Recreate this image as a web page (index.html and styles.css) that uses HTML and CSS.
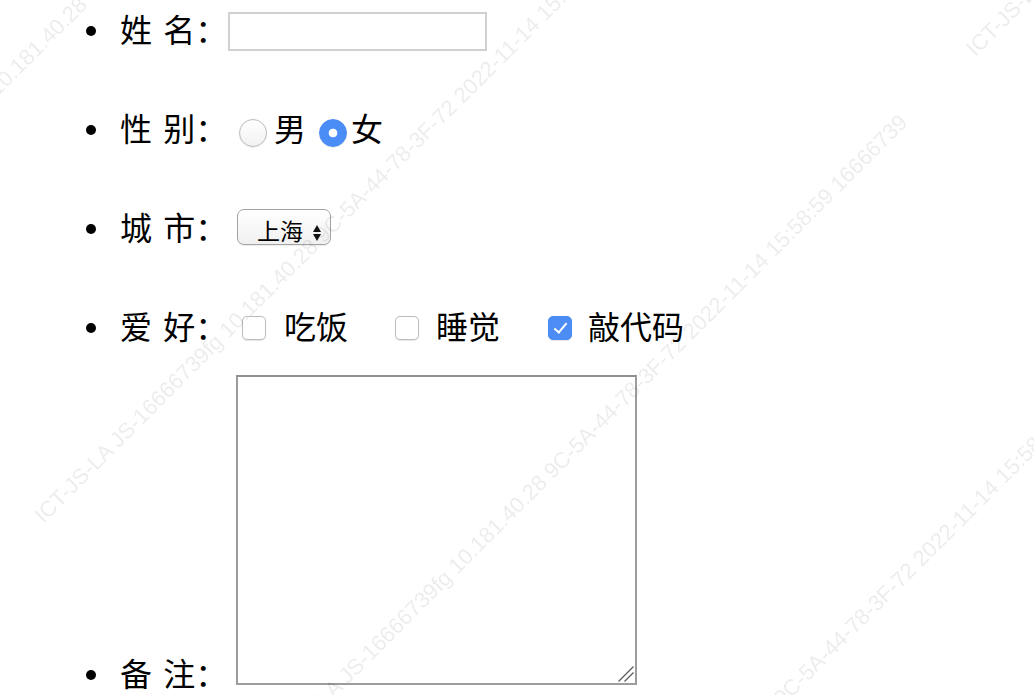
FILE: index.html
```html
<!DOCTYPE html>
<html lang="zh-CN">
<head>
<meta charset="utf-8">
<title>表单</title>
<link rel="stylesheet" href="styles.css">
</head>
<body>
<ul class="form">
  <li class="row">
    <span class="label">姓 名：</span>
    <input class="text-input" type="text">
  </li>
  <li class="row">
    <span class="label">性 别：</span>
    <label class="opt opt-male"><input class="radio" type="radio" name="sex"><span class="txt">男</span></label>
    <label class="opt opt-female"><input class="radio" type="radio" name="sex" checked><span class="txt">女</span></label>
  </li>
  <li class="row">
    <span class="label">城 市：</span>
    <span class="select-wrap">
      <select class="select">
        <option>上海</option>
        <option>北京</option>
        <option>广州</option>
      </select>
    </span>
  </li>
  <li class="row">
    <span class="label">爱 好：</span>
    <label class="opt opt-eat"><input class="check" type="checkbox"><span class="txt">吃饭</span></label>
    <label class="opt opt-sleep"><input class="check" type="checkbox"><span class="txt">睡觉</span></label>
    <label class="opt opt-code"><input class="check" type="checkbox" checked><span class="txt">敲代码</span></label>
  </li>
  <li class="row row-note">
    <span class="label">备 注：</span>
    <span class="area-wrap">
      <textarea class="area"></textarea>
      <svg class="grip" viewBox="0 0 16 16" aria-hidden="true">
        <line x1="0.5" y1="15.5" x2="15.5" y2="0.5"></line>
        <line x1="6.5" y1="15.5" x2="15.5" y2="6.5"></line>
      </svg>
    </span>
  </li>
</ul>

<div class="watermark" aria-hidden="true">
  <div class="wm-line wm-a"><span>ICT-JS-LA JS-16666739fg 10.181.40.28 9C-5A-44-78-3F-72 2022-11-14 15:58:59 16666739</span><span>ICT-JS-LA JS-16666739fg 10.181.40.28 9C-5A-44-78-3F-72 2022-11-14 15:58:59 16666739</span><span>ICT-JS-LA JS-16666739fg 10.181.40.28 9C-5A-44-78-3F-72 2022-11-14 15:58:59 16666739</span></div>
  <div class="wm-line wm-b"><span>ICT-JS-LA JS-16666739fg 10.181.40.28 9C-5A-44-78-3F-72 2022-11-14 15:58:59 16666739</span><span>ICT-JS-LA JS-16666739fg 10.181.40.28 9C-5A-44-78-3F-72 2022-11-14 15:58:59 16666739</span><span>ICT-JS-LA JS-16666739fg 10.181.40.28 9C-5A-44-78-3F-72 2022-11-14 15:58:59 16666739</span></div>
  <div class="wm-line wm-c"><span>ICT-JS-LA JS-16666739fg 10.181.40.28 9C-5A-44-78-3F-72 2022-11-14 15:58:59 16666739</span><span>ICT-JS-LA JS-16666739fg 10.181.40.28 9C-5A-44-78-3F-72 2022-11-14 15:58:59 16666739</span><span>ICT-JS-LA JS-16666739fg 10.181.40.28 9C-5A-44-78-3F-72 2022-11-14 15:58:59 16666739</span></div>
  <div class="wm-line wm-d"><span>ICT-JS-LA JS-16666739fg 10.181.40.28 9C-5A-44-78-3F-72 2022-11-14 15:58:59 16666739</span><span>ICT-JS-LA JS-16666739fg 10.181.40.28 9C-5A-44-78-3F-72 2022-11-14 15:58:59 16666739</span><span>ICT-JS-LA JS-16666739fg 10.181.40.28 9C-5A-44-78-3F-72 2022-11-14 15:58:59 16666739</span></div>
</div>
</body>
</html>
```

FILE: styles.css
```css
html, body {
  margin: 0;
  padding: 0;
  background: #fff;
}

body {
  font-family: "Noto Sans CJK SC", "Noto Sans", sans-serif;
  font-size: 32px;
  color: #000;
  overflow: hidden;
}

.form {
  list-style: none;
  margin: 11px 0 0;
  padding: 0 0 0 86px;
}

.row {
  display: flex;
  align-items: center;
  height: 40px;
}

.row + .row {
  margin-top: 59px;
}

.row::before {
  content: "";
  flex: none;
  width: 10px;
  height: 10px;
  border-radius: 50%;
  background: #000;
  margin-right: 24px;
}

.label {
  flex: none;
  width: 107px;
  line-height: 40px;
  white-space: nowrap;
  word-spacing: 4px;
  margin-bottom: 6px;
}

.txt {
  line-height: 40px;
  white-space: nowrap;
  margin-bottom: 6px;
}

.opt {
  display: flex;
  align-items: center;
}

/* text input */
.text-input {
  box-sizing: border-box;
  width: 259px;
  height: 39px;
  margin: 0 0 0 1px;
  padding: 0 6px;
  border: 2px solid #d0d0d0;
  border-radius: 0;
  background: #fff;
  font-family: inherit;
  font-size: 20px;
  outline: none;
}

/* radios */
.radio {
  -webkit-appearance: none;
  appearance: none;
  flex: none;
  box-sizing: border-box;
  width: 28px;
  height: 28px;
  margin: 5px 0 0 0;
  border-radius: 50%;
  border: 1px solid #bcbcbc;
  background: linear-gradient(#ffffff, #f2f2f2);
  box-shadow: 0 0.5px 1px rgba(0, 0, 0, 0.12);
}

.radio:checked {
  border-color: #4a8bf5;
  background: radial-gradient(circle, #fff 0 4px, #4b8df7 4.7px);
}

.opt-male {
  margin-left: 12px;
}

.opt-male .radio {
  margin-right: 7px;
}

.opt-female {
  margin-left: 13px;
}

.opt-female .radio {
  margin-right: 4px;
}

/* select */
.select-wrap {
  position: relative;
  display: inline-flex;
  margin: 0 0 4px 10px;
}

.select {
  -webkit-appearance: none;
  appearance: none;
  box-sizing: border-box;
  width: 94px;
  height: 36px;
  margin: 0;
  padding: 3px 0 0 19px;
  border: 1.3px solid #a4a4a4;
  border-radius: 7px;
  background: linear-gradient(#ffffff, #f0f0f0);
  box-shadow: 0 1px 1px rgba(0, 0, 0, 0.08);
  font-family: inherit;
  font-size: 23px;
  color: #000;
  outline: none;
}

.select-wrap::before,
.select-wrap::after {
  content: "";
  position: absolute;
  left: 76px;
  width: 0;
  height: 0;
  border-left: 4.5px solid transparent;
  border-right: 4.5px solid transparent;
  pointer-events: none;
}

.select-wrap::before {
  top: 16px;
  border-bottom: 7px solid #111;
}

.select-wrap::after {
  top: 25px;
  border-top: 7px solid #111;
}

/* checkboxes */
.check {
  -webkit-appearance: none;
  appearance: none;
  position: relative;
  flex: none;
  box-sizing: border-box;
  width: 24px;
  height: 24px;
  margin: 0;
  border: 1px solid #bdbdbd;
  border-radius: 5px;
  background: #fff;
  box-shadow: 0 0.5px 1px rgba(0, 0, 0, 0.1);
}

.check:checked {
  border-color: #4b8cf5;
  background: #4b8cf5;
}

.check:checked::after {
  content: "";
  position: absolute;
  left: 8px;
  top: 3px;
  width: 5px;
  height: 11px;
  border: solid #fff;
  border-width: 0 2.2px 2.2px 0;
  transform: rotate(40deg);
}

.opt-eat {
  margin-left: 15px;
}

.opt-eat .check {
  margin-right: 18px;
}

.opt-sleep {
  margin-left: 47px;
}

.opt-sleep .check {
  margin-right: 17px;
}

.opt-code {
  margin-left: 48px;
}

.opt-code .check {
  margin-right: 16px;
}

/* textarea row */
.form .row-note {
  height: auto;
  align-items: flex-end;
  margin-top: 27px;
}

.row-note::before {
  margin-bottom: 15px;
}

.row-note .label {
  margin-bottom: 3px;
}

.area-wrap {
  position: relative;
  display: flex;
  margin: 0 0 10px 9px;
}

.area {
  box-sizing: border-box;
  width: 401px;
  height: 310px;
  margin: 0;
  padding: 4px;
  border: 2px solid #9c9c9c;
  border-top-color: #8f8f8f;
  background: #fff;
  resize: none;
  font-family: inherit;
  font-size: 20px;
  outline: none;
}

.grip {
  position: absolute;
  right: 3px;
  bottom: 3px;
  width: 16px;
  height: 16px;
  stroke: #5a5a5a;
  stroke-width: 1.2;
  pointer-events: none;
}

/* watermark overlay */
.watermark {
  position: fixed;
  left: 0;
  top: 0;
  right: 0;
  bottom: 0;
  overflow: hidden;
  pointer-events: none;
  z-index: 10;
}

.wm-line {
  position: absolute;
  white-space: nowrap;
  font-family: "Liberation Sans", Arial, sans-serif;
  font-size: 22px;
  line-height: 22px;
  color: rgba(0, 0, 0, 0.075);
  transform: rotate(-45deg);
  transform-origin: 0 0;
}

.wm-line span {
  display: inline-block;
  margin-right: 94px;
}

.wm-a { left: -903px; top: 972px; }
.wm-b { left: -672px; top: 1214px; }
.wm-c { left: -443px; top: 1450px; }
.wm-d { left: -213px; top: 1677px; }
```
